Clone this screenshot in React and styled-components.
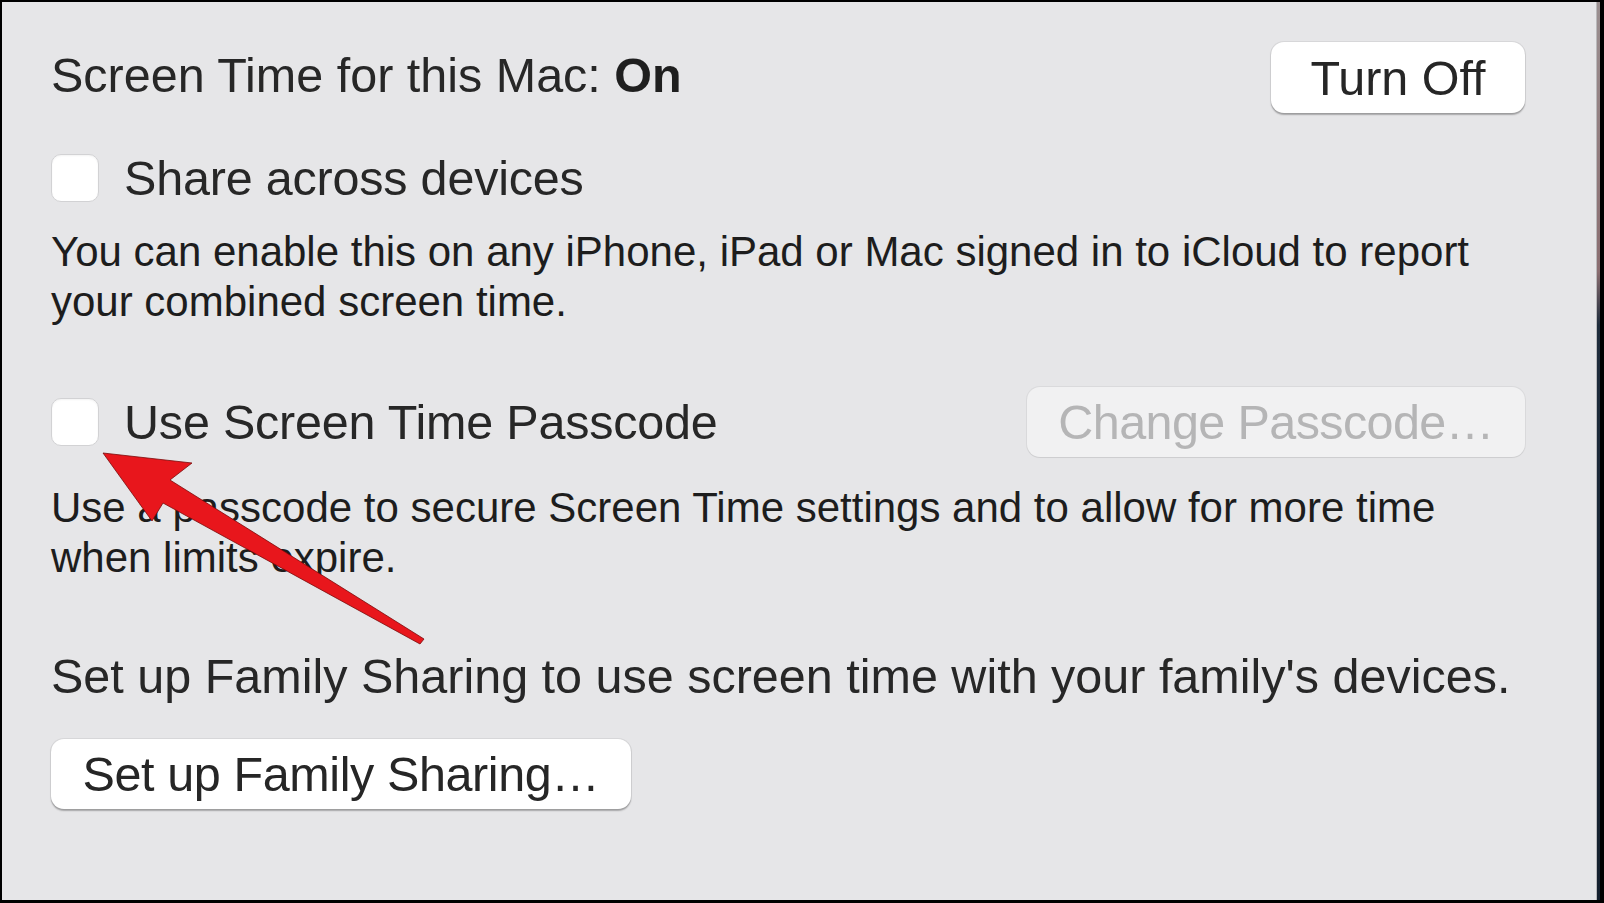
import React from 'react';
import styled, { createGlobalStyle } from 'styled-components';

const GlobalStyle = createGlobalStyle`
  html, body {
    margin: 0;
    padding: 0;
    background: #000;
  }
  body {
    font-family: "Liberation Sans", Arial, sans-serif;
  }
`;

const Frame = styled.div`
  display: flex;
  width: 1604px;
  height: 903px;
  padding: 2px 0 3px 2px;
  box-sizing: border-box;
  background: #000;
`;

const Panel = styled.div`
  position: relative;
  flex: 0 0 1595px;
  box-sizing: border-box;
  padding: 40px 71px 0 49px;
  background: #e6e6e8;
  border-right: 1px solid #b9b9bb;
  color: #272727;
`;

const EdgeStrip = styled.div`
  flex: 0 0 3px;
  background: linear-gradient(#9a8f90 0%, #8a6d70 30%, #1e2c3c 36%, #14202e 100%);
`;

const TopRow = styled.div`
  display: flex;
  align-items: center;
  justify-content: space-between;
  height: 71px;
`;

const Title = styled.div`
  margin-top: -5px;
  font-size: 48.5px;
  line-height: 58px;
  b {
    font-weight: 700;
    color: #1f1f1f;
  }
`;

const CheckRow = styled.div`
  display: flex;
  align-items: center;
  justify-content: space-between;
  height: ${(p) => p.$height}px;
  margin-top: ${(p) => p.$top}px;
`;

const CheckLabel = styled.label`
  display: flex;
  align-items: center;
  gap: 25px;
  font-size: 48.5px;
  line-height: 58px;
  letter-spacing: -0.2px;
`;

const Box = styled.span`
  display: block;
  width: 46px;
  height: 46px;
  background: #fff;
  border: 1px solid #d2d2d4;
  border-radius: 10px;
  box-shadow: inset 0 1px 2px rgba(0, 0, 0, 0.05);
`;

const Para = styled.p`
  margin: ${(p) => p.$top}px 0 0;
  font-size: 42px;
  line-height: 50px;
  color: #1d1d1d;
`;

const Lead = styled.p`
  margin: 64px 0 0;
  font-size: 48.5px;
  line-height: 58px;
  white-space: nowrap;
`;

const Button = styled.button`
  display: flex;
  align-items: center;
  justify-content: center;
  width: ${(p) => p.$width}px;
  height: ${(p) => p.$height}px;
  margin-top: ${(p) => p.$top || 0}px;
  padding: 0;
  border: none;
  border-radius: 13px;
  font-family: "Liberation Sans", Arial, sans-serif;
  font-size: 48.5px;
  letter-spacing: ${(p) => p.$tight || 0}px;
  white-space: nowrap;
  color: ${(p) => (p.disabled ? '#b5b5b6' : '#262626')};
  background: ${(p) => (p.disabled ? '#f1f1f2' : '#ffffff')};
  box-shadow: ${(p) =>
    p.disabled
      ? '0 0 0 1px rgba(0,0,0,0.05), 0 1px 1px rgba(0,0,0,0.06)'
      : '0 0 0 1px rgba(0,0,0,0.06), 0 1.5px 1.5px rgba(0,0,0,0.28)'};
`;

const Arrow = styled.svg`
  position: absolute;
  left: 98px;
  top: 446px;
  width: 330px;
  height: 200px;
  pointer-events: none;
`;

function Checkbox({ children }) {
  return (
    <CheckLabel>
      <Box />
      {children}
    </CheckLabel>
  );
}

export default function App() {
  return (
    <>
      <GlobalStyle />
      <Frame>
        <Panel>
          <TopRow>
            <Title>
              Screen Time for this Mac: <b>On</b>
            </Title>
            <Button $width={254} $height={71}>Turn Off</Button>
          </TopRow>

          <CheckRow $top={41} $height={48}>
            <Checkbox>Share across devices</Checkbox>
          </CheckRow>
          <Para $top={25}>
            You can enable this on any iPhone, iPad or Mac signed in to iCloud to report your combined screen time.
          </Para>

          <CheckRow $top={60} $height={70}>
            <Checkbox>Use Screen Time Passcode</Checkbox>
            <Button $width={498} $height={70} $tight={-0.6} disabled>
              Change Passcode…
            </Button>
          </CheckRow>
          <Para $top={26}>
            Use a passcode to secure Screen Time settings and to allow for more time when limits expire.
          </Para>

          <Lead>Set up Family Sharing to use screen time with your family's devices.</Lead>
          <Button $width={580} $height={70} $top={34} $tight={-0.4}>
            Set up Family Sharing…
          </Button>

          <Arrow viewBox="0 0 330 200">
            <polygon
              points="3,5 92,15 70,32 324,191 320,196 63,55 52,73"
              fill="#e8161c"
              stroke="#7a0a0a"
              strokeWidth="0.8"
              strokeLinejoin="round"
            />
          </Arrow>
        </Panel>
        <EdgeStrip />
      </Frame>
    </>
  );
}
